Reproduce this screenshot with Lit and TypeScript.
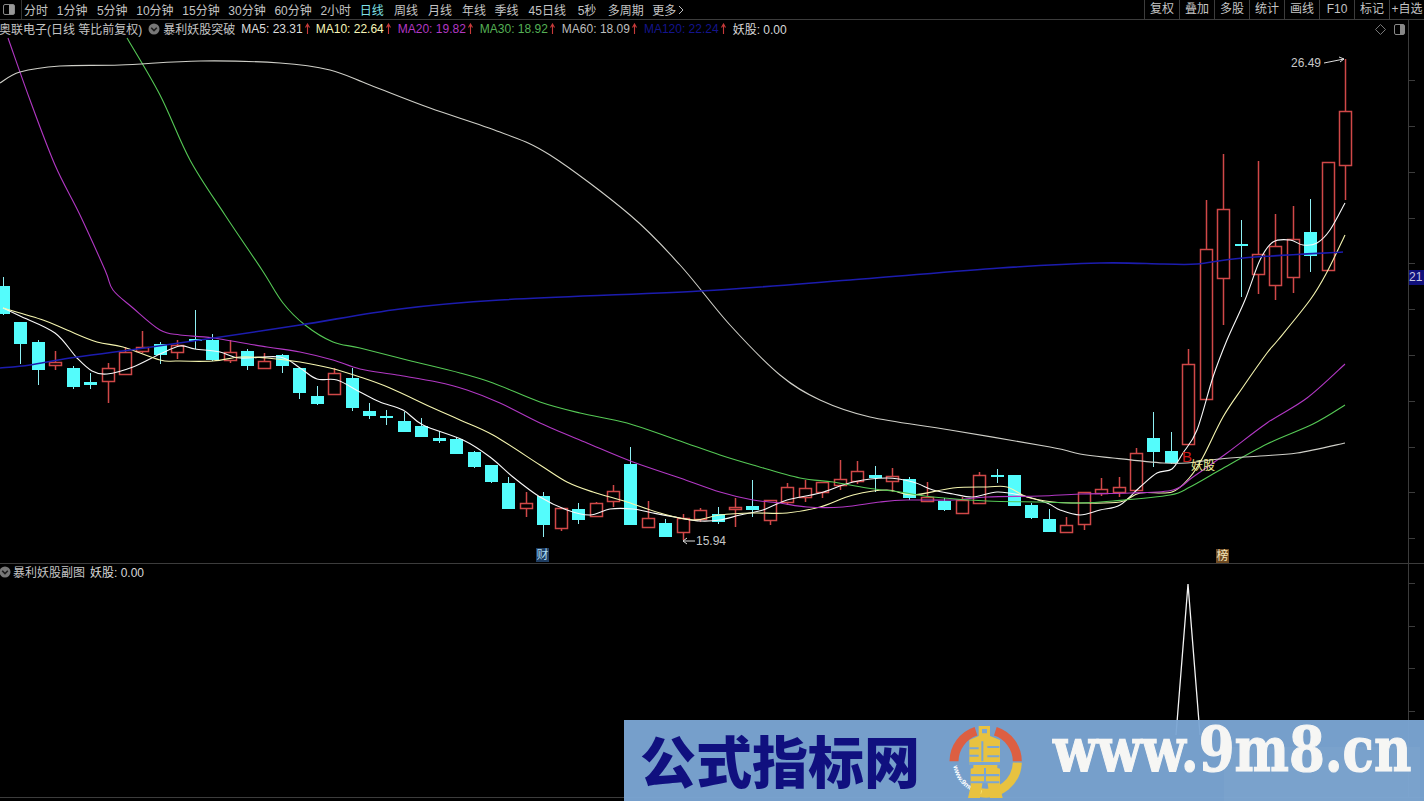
import { LitElement, html, svg, css } from "lit";
import { customElement } from "lit/decorators.js";

// type (c = cyan falling, r = red rising), high, body top, body bottom, low
const candles: [string, number, number, number, number][] = [
  ["c", 277, 286, 314, 315], ["c", 322, 322, 344, 364], ["c", 340, 342, 370, 385], ["r", 351, 362, 365, 370],
  ["c", 366, 368, 387, 389], ["c", 373, 382, 385, 389], ["r", 363, 368, 381, 403], ["r", 347, 352, 374, 374],
  ["r", 331, 347, 351, 353], ["c", 342, 344, 355, 364], ["r", 340, 345, 352, 359], ["c", 310, 339, 341, 349],
  ["c", 334, 340, 360, 361], ["r", 340, 352, 360, 363], ["c", 349, 351, 366, 370], ["r", 353, 361, 368, 369],
  ["c", 354, 355, 366, 373], ["c", 368, 368, 393, 399], ["c", 386, 396, 404, 405], ["r", 368, 373, 394, 395],
  ["c", 368, 378, 408, 411], ["c", 403, 411, 416, 419], ["c", 410, 416, 417, 425], ["c", 412, 421, 432, 432],
  ["c", 418, 426, 437, 437], ["c", 431, 438, 441, 443], ["c", 437, 439, 454, 454], ["c", 451, 452, 467, 468],
  ["c", 465, 465, 482, 483], ["c", 477, 483, 509, 509], ["r", 492, 503, 508, 517], ["c", 492, 496, 525, 537],
  ["r", 508, 508, 528, 531], ["c", 503, 509, 520, 524], ["r", 502, 503, 516, 517], ["r", 485, 491, 501, 507],
  ["c", 447, 464, 525, 525], ["r", 501, 518, 527, 527], ["c", 519, 523, 537, 537], ["r", 514, 518, 532, 540],
  ["r", 508, 510, 519, 522], ["c", 507, 514, 522, 524], ["r", 498, 507, 508, 527], ["c", 480, 506, 510, 517],
  ["r", 500, 500, 520, 525], ["r", 483, 487, 502, 505], ["r", 480, 488, 497, 502], ["r", 482, 482, 492, 498],
  ["r", 460, 479, 485, 490], ["r", 461, 471, 481, 484], ["c", 466, 475, 478, 492], ["r", 468, 476, 481, 492],
  ["c", 477, 479, 498, 500], ["r", 482, 497, 501, 502], ["c", 498, 501, 510, 511], ["r", 497, 500, 513, 513],
  ["r", 472, 475, 503, 503], ["c", 469, 475, 476, 483], ["c", 475, 475, 506, 506], ["c", 503, 505, 518, 519],
  ["c", 509, 519, 532, 532], ["r", 517, 525, 532, 533], ["r", 492, 492, 524, 530], ["r", 478, 489, 493, 496],
  ["r", 477, 487, 492, 497], ["r", 448, 453, 490, 491], ["c", 412, 438, 452, 467], ["c", 432, 451, 463, 464],
  ["r", 349, 364, 444, 445], ["r", 200, 249, 399, 400], ["r", 154, 209, 278, 325], ["c", 220, 244, 246, 297],
  ["r", 161, 254, 274, 294], ["r", 214, 246, 285, 300], ["r", 206, 239, 277, 293], ["c", 199, 232, 256, 272],
  ["r", 162, 162, 270, 270], ["r", 59, 111, 165, 200],
];

const lines = [
  {
    color: "#f8f8f8",
    width: 1.1,
    pts: "3,308 20,316 55,333 77,358 92,371 107,374 133,367 160,354 180,346 195,349 220,352 240,358 280,357 300,368 317,379 337,380 360,392 380,402 403,410 423,425 463,440 490,457 513,477 540,497 567,510 590,515 610,509 633,509 653,513 680,518 700,521 720,520 740,515 763,510 787,500 820,493 853,482 887,478 913,482 933,490 953,494 973,497 997,492 1020,495 1047,503 1060,510 1080,515 1100,510 1120,505 1140,487 1157,473 1172,469 1183,453 1197,430 1213,377 1227,340 1245,300 1260,260 1273,242 1290,240 1303,245 1317,243 1330,230 1345,203",
  },
  {
    color: "#f6f6b0",
    width: 1.1,
    pts: "3,308 43,320 67,330 97,342 123,347 160,360 177,361 213,361 240,357 267,358 300,362 330,368 360,377 390,388 433,408 460,420 493,435 540,465 567,482 593,492 627,502 660,513 693,520 720,515 753,513 787,513 820,507 853,495 887,490 913,495 953,488 987,487 1007,487 1027,497 1053,502 1080,503 1120,502 1140,493 1172,492 1190,477 1203,457 1223,417 1243,387 1267,353 1278,340 1310,300 1327,272 1345,235",
  },
  {
    color: "#b238c4",
    width: 1.1,
    pts: "8,38 30,100 55,165 80,215 105,270 113,290 133,308 160,330 180,335 213,338 267,347 300,352 333,360 360,369 397,375 437,382 467,390 500,403 540,423 587,443 633,462 680,478 720,492 753,500 780,503 807,507 843,507 880,502 907,500 953,500 987,497 1040,496 1080,494 1130,493 1173,490 1193,477 1227,453 1267,423 1307,398 1345,364",
  },
  {
    color: "#55c855",
    width: 1.1,
    pts: "127,38 160,95 190,160 225,215 262,270 283,303 305,325 333,342 360,348 407,360 460,373 493,383 540,402 580,413 627,423 677,440 720,455 753,465 800,478 833,482 867,488 900,492 933,497 987,501 1040,502 1080,503 1113,501 1170,495 1190,487 1220,470 1267,444 1313,424 1345,405",
  },
  {
    color: "#cfcfc8",
    width: 1.1,
    pts: "0,83 20,72 60,66 120,65 200,61 280,63 330,70 370,85 430,108 500,132 550,155 630,215 680,265 730,325 780,375 820,400 870,417 950,430 1050,447 1080,454 1113,458 1163,463 1187,463 1220,459 1260,456 1297,453 1345,443",
  },
  {
    color: "#1c1cae",
    width: 1.6,
    pts: "0,368 30,365 70,358 130,350 200,340 300,325 400,309 500,300 700,291 850,280 1000,268 1100,263 1163,264 1197,264 1243,258 1343,252",
  },
];

// label plus the extra space the terminal leaves before it
const periods: [string, number][] = [
  ["分时", 0], ["1分钟", 0], ["5分钟", 0.8], ["10分钟", 0], ["15分钟", 0], ["30分钟", 0], ["60分钟", 0], ["2小时", 0],
  ["日线", 0], ["周线", 1.4], ["月线", 1.3], ["年线", 1.3], ["季线", 0], ["45日线", 1.3], ["5秒", 3], ["多周期", 2.6],
];
const tools = ["复权", "叠加", "多股", "统计", "画线", "F10", "标记", "+自选"];
const maItems = [
  ["MA5: 23.31", "#dcdcdc"],
  ["MA10: 22.64", "#f6f6b8"],
  ["MA20: 19.82", "#b238c4"],
  ["MA30: 18.92", "#55b055"],
  ["MA60: 18.09", "#bdbdbd"],
  ["MA120: 22.24", "#14148c"],
];
const mainTicks = [80, 126, 172, 218, 263, 309, 355, 401, 447, 492, 538];
const subTicks = [583, 626, 668, 711];

const chevron = html`<svg class="chev" viewBox="0 0 12 12">
  <circle cx="6" cy="6" r="5.5" fill="#777"></circle>
  <path d="M3.2 4.8 L6 7.6 L8.8 4.8" fill="none" stroke="#1c1c1c" stroke-width="1.6"></path>
</svg>`;

const upArrow = html`<svg class="up" viewBox="0 0 5 12">
  <path d="M2.5 1 V11 M.5 4.5 L2.5 1 L4.5 4.5" fill="none" stroke="#c83a3a" stroke-width="1.1"></path>
</svg>`;

// catmull-rom through the sampled points, so the averages bend instead of kinking
function smooth(pts: string) {
  const p = pts.split(" ").map((s) => s.split(",").map(Number));
  let d = `M${p[0][0]} ${p[0][1]}`;
  for (let i = 0; i < p.length - 1; i++) {
    const a = p[Math.max(i - 1, 0)];
    const b = p[i];
    const c = p[i + 1];
    const e = p[Math.min(i + 2, p.length - 1)];
    const c1x = b[0] + (c[0] - a[0]) / 6;
    const c1y = b[1] + (c[1] - a[1]) / 6;
    const c2x = c[0] - (e[0] - b[0]) / 6;
    const c2y = c[1] - (e[1] - b[1]) / 6;
    d += ` C${c1x.toFixed(1)} ${c1y.toFixed(1)} ${c2x.toFixed(1)} ${c2y.toFixed(1)} ${c[0]} ${c[1]}`;
  }
  return d;
}

@customElement("app-root")
class AppRoot extends LitElement {
  static styles = css`
    :host {
      display: block;
      position: relative;
      width: 1424px;
      height: 801px;
      overflow: hidden;
      background: #000;
      color: #c4c4c4;
      font: 12px "Liberation Sans", "Noto Sans CJK SC", sans-serif;
    }

    .toolbar {
      display: flex;
      align-items: center;
      height: 19px;
      border-bottom: 1px solid #3c3c3c;
    }

    .toggle {
      width: 10px;
      height: 9px;
      margin: 0 6px 0 3px;
      border: 1px solid #888;
      border-radius: 2px;
      background: linear-gradient(90deg, #000 50%, #999 50%);
    }

    .periods {
      display: flex;
      gap: 8.7px;
      padding-left: 2px;
      border-left: 1px solid #333;
      height: 19px;
      align-items: center;
    }

    .periods .on {
      color: #7fe0e8;
    }

    .more {
      display: flex;
      align-items: center;
      gap: 2px;
    }

    .tools {
      display: flex;
      margin-left: auto;
    }

    .tools span {
      width: 35px;
      height: 19px;
      line-height: 19px;
      text-align: center;
      border-left: 1px solid #3c3c3c;
      box-sizing: border-box;
    }

    .pane {
      display: grid;
      grid-template-columns: 1408px 16px;
      border-bottom: 1px solid #3c3c3c;
    }

    .pane.main {
      height: 543px;
    }

    .pane.sub {
      height: 233px;
    }

    .plot {
      position: relative;
    }

    .plot svg.canvas {
      position: absolute;
      inset: 0;
      width: 1408px;
      height: 100%;
    }

    .axis {
      position: relative;
      border-left: 1px solid #3c3c3c;
    }

    .tick {
      position: absolute;
      left: 0;
      width: 6px;
      height: 1px;
      background: #3c3c3c;
    }

    .price {
      position: absolute;
      left: 0;
      top: 250px;
      width: 15px;
      height: 15px;
      line-height: 15px;
      background: #10107c;
      color: #c8c8e0;
    }

    .legend {
      position: relative;
      display: flex;
      align-items: center;
      height: 17px;
      white-space: nowrap;
    }

    .legend .name {
      margin-left: -1px;
      margin-right: 6px;
    }

    .chev {
      width: 12px;
      height: 12px;
      margin-right: 3px;
      flex: none;
    }

    .legend .title {
      margin-right: 6px;
    }

    .ma {
      display: flex;
      align-items: center;
      gap: 2px;
      margin-right: 7px;
    }

    .ma.first {
      margin-right: 6px;
    }

    .up {
      width: 5px;
      height: 12px;
    }

    .yao {
      color: #d8d8d8;
    }

    .corner {
      display: flex;
      align-items: center;
      gap: 8px;
      margin-left: auto;
      margin-right: 3px;
      margin-top: 2px;
    }

    .corner svg {
      width: 11px;
      height: 11px;
    }

    .corner .toggle {
      width: 9px;
      margin: 0;
      background: linear-gradient(90deg, #000 50%, #888 50%);
    }

    .sub .legend {
      height: 15px;
    }

    .sub .legend .title {
      margin-left: 1px;
      margin-right: 5px;
    }

    .sub .chev {
      margin: 0 1px 0 -1px;
    }

    .tag {
      font-size: 12px;
      fill: #c8c8c8;
    }

    .mark {
      font-size: 12px;
      text-anchor: middle;
    }

    .mark.buy {
      font-size: 15px;
    }

    .watermark {
      position: absolute;
      left: 624px;
      top: 720px;
      width: 800px;
      height: 81px;
      display: flex;
      align-items: center;
      background: rgba(123, 166, 211, 0.96);
    }

    .wm-title {
      flex: none;
      width: 316px;
      padding-left: 16px;
      box-sizing: border-box;
      font: 900 56px/1 "Noto Sans CJK SC", sans-serif;
      color: #10107f;
      white-space: nowrap;
      margin-top: -4px;
    }

    .wm-logo {
      width: 90px;
      height: 85px;
      flex: none;
      margin-top: -1px;
    }

    .wm-panel {
      position: absolute;
      left: 600px;
      top: 27px;
      width: 196px;
      height: 54px;
      background: rgba(255, 255, 255, 0.035);
    }

    .wm-url {
      position: relative;
      flex: none;
      width: 357px;
      margin-left: 23px;
      margin-top: -22px;
    }

    .wm-url span {
      display: inline-block;
      font: bold 62px/1 "DejaVu Serif", serif;
      color: #f6f6f4;
      -webkit-text-stroke: 1.2px #f6f6f4;
      white-space: nowrap;
      transform: scaleX(0.83);
      transform-origin: left center;
    }
  `;

  private _candle(c: [string, number, number, number, number], i: number) {
    const [kind, high, top, bottom, low] = c;
    const x = Math.round(3 + 17.43 * i) + 0.5;
    if (kind === "c") {
      return svg`<path d="M${x} ${high} V${low}" stroke="#8ff0f4" />
        <rect x=${x - 6.5} y=${top} width="13" height=${Math.max(bottom - top, 2)} fill="#54fcfc" />`;
    }
    return svg`<path d="M${x} ${high} V${low}" stroke="#d04848" stroke-width="1.5" />
      <rect x=${x - 6} y=${top + 0.5} width="12" height=${Math.max(bottom - top, 2)} fill="#000" stroke="#d04848" stroke-width="1.5" />`;
  }

  private _mainCanvas() {
    return html`<svg class="canvas" viewBox="0 20 1408 543">
      <g fill="none">${candles.map((c, i) => this._candle(c, i))}</g>
      ${lines.map(
        (l) => svg`<path d=${smooth(l.pts)} fill="none" stroke=${l.color} stroke-width=${l.width} stroke-linejoin="round" />`
      )}
      <text class="tag" x="1291" y="67">26.49</text>
      <path d="M1324 63 L1344 59 M1339 57 L1344 59 L1340 62" fill="none" stroke="#ddd" />
      <text class="tag" x="696" y="545">15.94</text>
      <path d="M695 541 H683 M687 538 L683 541 L687 544" fill="none" stroke="#ddd" />
      <text x="1187" y="462" class="mark buy" fill="#cc1a1a">B</text>
      <text x="1203" y="470" class="mark" fill="#eeee98">妖股</text>
      <rect x="536" y="548" width="13" height="14" fill="#1e3d62" />
      <text x="542.5" y="559" class="mark" fill="#a8d8f0">财</text>
      <rect x="1216" y="549" width="13" height="14" fill="#6e4a22" />
      <text x="1222.5" y="560" class="mark" fill="#f6e6b8">榜</text>
    </svg>`;
  }

  private _logo() {
    return html`<svg class="wm-logo" viewBox="0 0 270 255">
      <defs><path id="ring-text" d="M40 144 A98 98 0 0 0 123 227"></path></defs>
      <g fill="none" stroke-width="27">
        <path d="M42 130 A95 95 0 0 1 108 40" stroke="#dd5f42"></path>
        <path d="M166 40 A95 95 0 0 1 232 130" stroke="#dd5f42"></path>
        <path d="M232 134 A95 95 0 0 1 120 224" stroke="#e8c240"></path>
      </g>
      <text font-size="21" font-weight="700" fill="#fff" font-family="Liberation Sans">
        <textPath href="#ring-text">www.9m8.cn</textPath>
      </text>
      <path
        d="M116 24 H150 V54 L180 66 V140 H172 V150 L180 152 V205 L188 240 H150 L142 192 H128 L120 240 H84 L92 205 V152 L100 150 V140 H88 V66 L116 54Z"
        fill="#e8c240"
      ></path>
      <path
        d="M126 33 H141 V46 H126Z M88 88 H116 V94 H88Z M88 110 H116 V116 H88Z M124 70 H130 V130 H124Z M142 84 H178 V90 H142Z M142 112 H178 V118 H142Z M88 132 H180 V141 H88Z M92 168 H178 V175 H92Z M132 150 H138 V190 H132Z M92 190 H178 V196 H92Z"
        fill="#7ba6d3"
      ></path>
    </svg>`;
  }

  render() {
    return html`
      <div class="toolbar">
        <div class="toggle"></div>
        <div class="periods">
          ${periods.map(
            ([p, extra]) =>
              html`<span class=${p === "日线" ? "on" : ""} style="margin-left:${extra}px">${p}</span>`
          )}
          <span class="more">更多
            <svg width="6" height="10" viewBox="0 0 6 10"><path d="M1 1 L5 5 L1 9" fill="none" stroke="#bbb"></path></svg>
          </span>
        </div>
        <div class="tools">${tools.map((t) => html`<span>${t}</span>`)}</div>
      </div>

      <div class="pane main">
        <div class="plot">
          ${this._mainCanvas()}
          <div class="legend">
            <span class="name">奥联电子(日线 等比前复权)</span>
            ${chevron}
            <span class="title">暴利妖股突破</span>
            ${maItems.map(
              ([label, color], i) =>
                html`<span class="ma ${i === 0 ? "first" : ""}"><span style="color:${color}">${label}</span>${upArrow}</span>`
            )}
            <span class="yao">妖股: 0.00</span>
            <span class="corner">
              <svg viewBox="0 0 11 11"><path d="M5.5 .5 L10.5 5.5 L5.5 10.5 L.5 5.5Z" fill="none" stroke="#777"></path></svg>
              <span class="toggle"></span>
            </span>
          </div>
        </div>
        <div class="axis">
          ${mainTicks.map((y) => html`<i class="tick" style="top:${y - 20}px"></i>`)}
          <div class="price">21</div>
        </div>
      </div>

      <div class="pane sub">
        <div class="plot">
          <svg class="canvas" viewBox="0 564 1408 233">
            <path d="M1176 735 L1188 584 L1200 735" fill="none" stroke="#f4f4f4" stroke-width="1.3"></path>
          </svg>
          <div class="legend">
            ${chevron}
            <span class="title">暴利妖股副图</span>
            <span class="yao">妖股: 0.00</span>
          </div>
        </div>
        <div class="axis">
          ${subTicks.map((y) => html`<i class="tick" style="top:${y - 564}px"></i>`)}
        </div>
      </div>

      <div class="watermark">
        <div class="wm-panel"></div>
        <div class="wm-title">公式指标网</div>
        ${this._logo()}
        <div class="wm-url"><span>www.9m8.cn</span></div>
      </div>
    `;
  }
}
